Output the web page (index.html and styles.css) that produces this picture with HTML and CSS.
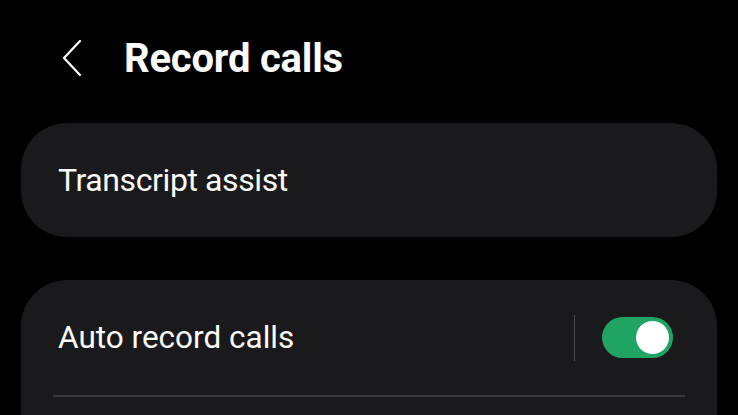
FILE: index.html
```html
<!DOCTYPE html>
<html>
<head>
<meta charset="utf-8">
<link rel="stylesheet" href="styles.css">
</head>
<body>
<div class="screen">
  <header class="header">
    <svg class="back" width="22" height="38" viewBox="0 0 22 38"><path d="M19 2 L3 19 L19 36" fill="none" stroke="#fff" stroke-width="2.2" stroke-linecap="round" stroke-linejoin="round"/></svg>
    <h1 class="title">Record calls</h1>
  </header>
  <section class="card single">
    <div class="row-label condensed">Transcript assist</div>
  </section>
  <section class="card group">
    <div class="row">
      <div class="row-label">Auto record calls</div>
      <div class="row-end">
        <div class="vdivider"></div>
        <div class="toggle on"><div class="knob"></div></div>
      </div>
    </div>
    <div class="hdivider"></div>
  </section>
</div>
</body>
</html>
```
FILE: styles.css
```css
html, body {
  margin: 0;
  padding: 0;
  background: #000;
}
.screen {
  width: 738px;
  height: 415px;
  overflow: hidden;
  background: #000;
  font-family: Roboto, "Noto Sans", sans-serif;
  color: #fafafa;
}
.header {
  height: 123px;
  display: flex;
  align-items: flex-start;
  padding: 39px 0 0 61px;
  box-sizing: border-box;
}
.back {
  display: block;
}
.title {
  margin: -3px 0 0 41px;
  font-size: 40px;
  font-weight: 700;
  letter-spacing: -0.2px;
  line-height: 46px;
}
.card {
  margin: 0 21px;
  background: #1a1a1c;
  border-radius: 46px;
}
.single {
  height: 114px;
  display: flex;
  align-items: center;
  padding-left: 37px;
}
.row-label {
  font-size: 31.5px;
  line-height: 36px;
}
.condensed {
  font-size: 32px;
  letter-spacing: -0.4px;
}
.group {
  margin-top: 43px;
  height: 200px;
  padding: 0 32px;
  border-radius: 46px 46px 0 0;
}
.row {
  height: 115px;
  display: flex;
  align-items: center;
  padding-left: 5px;
  padding-right: 12px;
  box-sizing: border-box;
}
.row-end {
  margin-left: auto;
  display: flex;
  align-items: center;
  gap: 27px;
}
.vdivider {
  width: 1px;
  height: 46px;
  background: #48484a;
}
.toggle {
  width: 71px;
  height: 41px;
  border-radius: 21px;
  background: #1fa463;
  display: flex;
  align-items: center;
  justify-content: flex-end;
  padding-right: 4px;
  box-sizing: border-box;
}
.knob {
  width: 33px;
  height: 33px;
  border-radius: 50%;
  background: #fff;
}
.hdivider {
  height: 2px;
  background: #3a3a3c;
}
```
